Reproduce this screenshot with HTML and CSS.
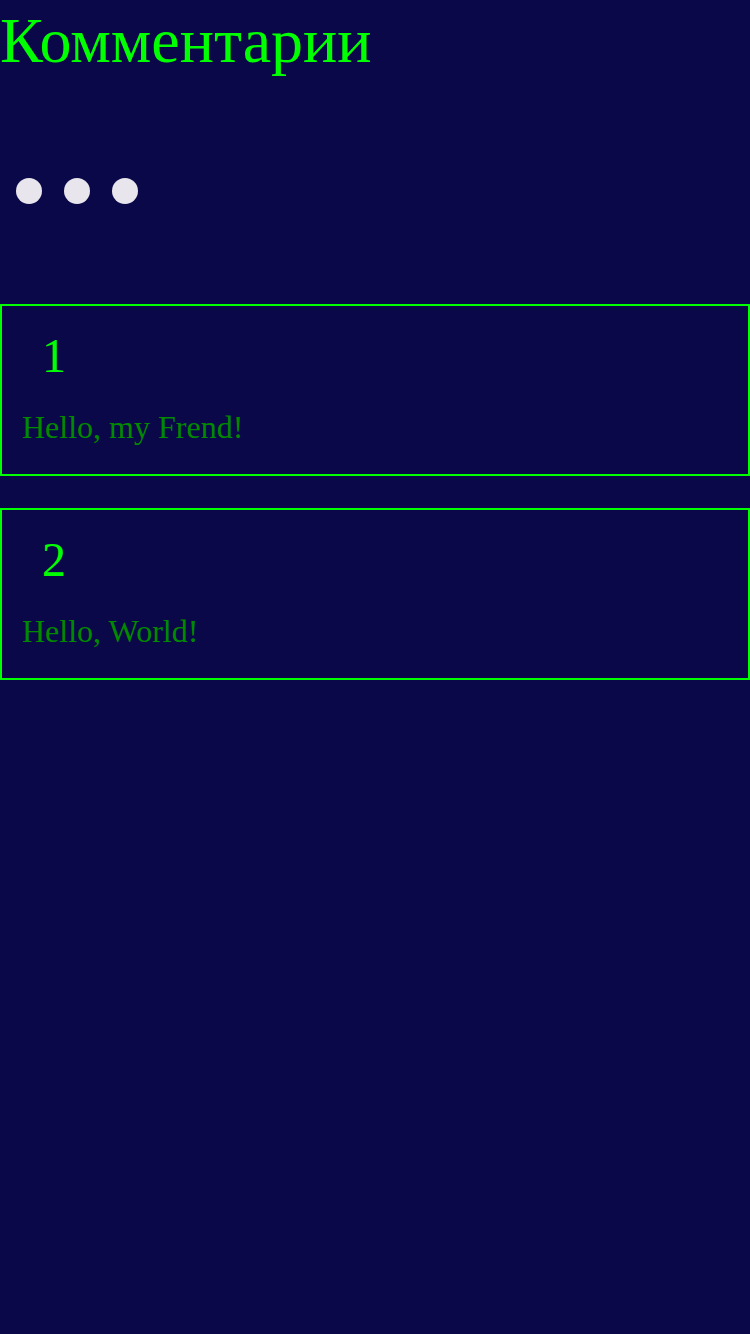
FILE: index.html
```html
<!DOCTYPE html>
<html lang="ru">
<head>
<meta charset="utf-8">
<link rel="stylesheet" href="styles.css">
</head>
<body>
<h1 class="title">Комментарии</h1>
<div class="loader">
  <span class="dot"></span><span class="dot"></span><span class="dot"></span>
</div>
<div class="list">
  <div class="card">
    <div class="num">1</div>
    <div class="text">Hello, my Frend!</div>
  </div>
  <div class="card">
    <div class="num">2</div>
    <div class="text">Hello, World!</div>
  </div>
</div>
</body>
</html>
```
FILE: styles.css
```css
html, body {
  margin: 0;
  padding: 0;
  background: #0a0848;
  min-height: 100%;
}
body {
  font-family: "Liberation Serif", "Times New Roman", serif;
  width: 750px;
  min-height: 1334px;
}
.title {
  margin: 0;
  padding-top: 5px;
  font-weight: normal;
  font-size: 64px;
  line-height: 71px;
  color: #00ff00;
}
.loader {
  display: flex;
  gap: 22px;
  padding: 102px 0 0 16px;
  height: 26px;
}
.dot {
  width: 26px;
  height: 26px;
  border-radius: 50%;
  background: #e8e6ec;
}
.list {
  display: flex;
  flex-direction: column;
  gap: 32px;
  margin-top: 100px;
}
.card {
  border: 2px solid #00ff00;
  height: 168px;
  box-sizing: content-box;
  padding: 0 20px;
}
.num {
  color: #00ff00;
  font-size: 48px;
  line-height: 54px;
  padding: 23px 0 0 20px;
}
.text {
  color: #008a00;
  font-size: 32px;
  line-height: 36px;
  margin-top: 26px;
}
```
